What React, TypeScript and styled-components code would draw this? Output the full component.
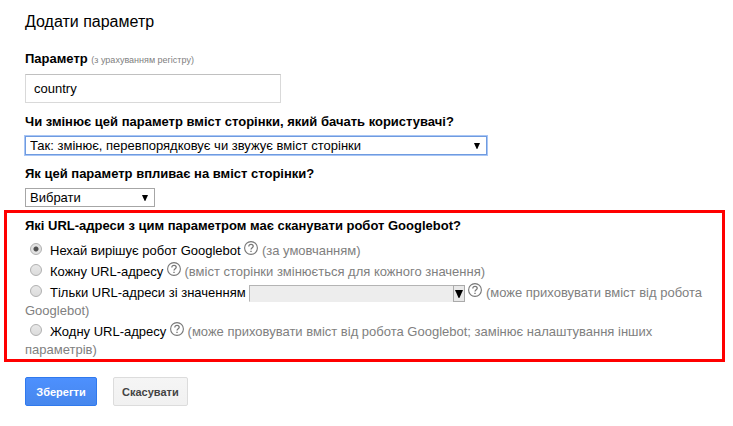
import React from "react";
import styled, { createGlobalStyle } from "styled-components";

const GlobalStyle = createGlobalStyle`
  *, *::before, *::after { box-sizing: border-box; }
  body {
    margin: 0;
    background: #fff;
    color: #000;
    font: 13px/18px "Liberation Sans", Arial, sans-serif;
  }
  input, select, button { font: inherit; margin: 0; }
`;

const Form = styled.form`
  display: flex;
  flex-direction: column;
  padding: 13px 8px 20px 4px;
`;

const Section = styled.div`
  display: flex;
  flex-direction: column;
  align-items: flex-start;
  padding-left: 21px;
`;

const Title = styled.h1`
  margin: 0 0 19px;
  font-size: 16px;
  font-weight: 400;
  line-height: 18px;
`;

const FieldLabel = styled.label`
  font-weight: 700;
  margin-bottom: 5px;
`;

const Note = styled.span`
  font-size: 9px;
  font-weight: 400;
  color: #808080;
`;

const TextInput = styled.input`
  width: 256px;
  max-width: 100%;
  height: 29px;
  margin-bottom: 10px;
  padding: 0 8px;
  border: 1px solid #d9d9d9;
  border-top-color: #c0c0c0;
  outline: none;
`;

const SelectFrame = styled.div<{ $width: number }>`
  display: grid;
  align-items: center;
  width: ${(p) => p.$width}px;
  max-width: 100%;
  margin-bottom: 10px;

  & > * { grid-area: 1 / 1; }
  & > svg { justify-self: end; margin-right: 7px; pointer-events: none; }
`;

const Select = styled.select<{ $active?: boolean }>`
  appearance: none;
  width: 100%;
  height: 19px;
  padding: 0 20px 0 4px;
  border: 1px solid ${(p) => (p.$active ? "#6f9be0" : "#a6a6a6")};
  border-radius: 0;
  box-shadow: ${(p) => (p.$active ? "0 0 0 1px #a9c6f5" : "none")};
  background: #fff;
  color: #000;
  outline: none;
`;

const Highlight = styled.fieldset`
  min-width: 0;
  margin: -7px 0 0;
  padding: 4px 8px 0 18px;
  border: 3px solid #f00;
`;

const Question = styled.div`
  font-weight: 700;
  margin-bottom: 4px;
`;

const Option = styled.div`
  padding-top: 3px;
  color: #808080;
`;

const OptionLabel = styled.label`
  color: #000;
`;

const Radio = styled.input`
  appearance: none;
  width: 12px;
  height: 12px;
  margin: 0 8px 0 5px;
  border: 1px solid #b0b0b0;
  border-radius: 50%;
  background: linear-gradient(#e8e8e8, #dcdcdc);
  vertical-align: 0;

  &:checked {
    background: radial-gradient(circle, #505050 0 2px, #e2e2e2 3px);
  }
`;

const HelpButton = styled.button`
  display: inline-block;
  width: 14px;
  height: 14px;
  margin-top: -2px;
  padding: 0;
  border: 0;
  background: none;
  color: #777;
  vertical-align: 0;

  & > svg { display: block; }
`;

const Combo = styled.span`
  display: inline-flex;
  width: 216px;
  height: 17px;
  margin-right: 3px;
  vertical-align: bottom;
`;

const ComboInput = styled.input`
  flex: 1;
  min-width: 0;
  padding: 0 4px;
  border: 1px solid #b4b4b4;
  border-right: 0;
  border-bottom-color: #ededed;
  border-radius: 0;
  background: #ededed;
`;

const ComboButton = styled.button`
  display: flex;
  align-items: center;
  justify-content: center;
  width: 12px;
  padding: 0;
  border: 1px solid #aaa;
  background: #e8e8e8;
  color: #000;
`;

const Actions = styled.div`
  display: flex;
  gap: 16px;
  margin-top: 15px;
  padding-left: 21px;
`;

const ActionButton = styled.button<{ $primary?: boolean }>`
  min-width: 72px;
  height: 29px;
  padding: 0 8px;
  border: 1px solid ${(p) => (p.$primary ? "#3079ed" : "#dcdcdc")};
  border-radius: 2px;
  background: ${(p) =>
    p.$primary
      ? "linear-gradient(#4d90fe, #4787ed)"
      : "linear-gradient(#f5f5f5, #f1f1f1)"};
  color: ${(p) => (p.$primary ? "#fff" : "#444")};
  font-size: 11px;
  font-weight: 700;
`;

const Arrow = ({ size = 6 }: { size?: number }) => (
  <svg width={size} height={size} viewBox="0 0 6 6" aria-hidden="true">
    <path d="M0 0h6L3.3 6h-.6z" fill="#000" />
  </svg>
);

const Help = () => (
  <HelpButton type="button" aria-label="Довідка">
    <svg width="14" height="14" viewBox="0 0 14 14" fill="none" aria-hidden="true">
      <circle cx="7" cy="7" r="6.4" stroke="currentColor" strokeWidth="1.1" />
      <path
        d="M4.8 5.5C4.8 4.1 5.7 3.3 7 3.3s2.2.8 2.2 1.9C9.2 6.7 7 6.8 7 8.6"
        stroke="currentColor"
        strokeWidth="1.3"
      />
      <path d="M6.3 9.7h1.4v1.4H6.3z" fill="currentColor" />
    </svg>
  </HelpButton>
);

const options = [
  { id: "auto", label: "Нехай вирішує робот Googlebot", note: "(за умовчанням)" },
  { id: "every", label: "Кожну URL-адресу", note: "(вміст сторінки змінюється для кожного значення)" },
  { id: "only", label: "Тільки URL-адреси зі значенням", note: "(може приховувати вміст від робота Googlebot)", combo: true },
  { id: "none", label: "Жодну URL-адресу", note: "(може приховувати вміст від робота Googlebot; замінює налаштування інших параметрів)" },
];

export default function App() {
  return (
    <>
      <GlobalStyle />
      <Form onSubmit={(e) => e.preventDefault()}>
        <Section>
          <Title>Додати параметр</Title>
          <FieldLabel htmlFor="param">
            Параметр <Note>(з урахуванням регістру)</Note>
          </FieldLabel>
          <TextInput id="param" defaultValue="country" />
          <FieldLabel htmlFor="changes">
            Чи змінює цей параметр вміст сторінки, який бачать користувачі?
          </FieldLabel>
          <SelectFrame $width={462}>
            <Select id="changes" $active>
              <option>Так: змінює, перевпорядковує чи звужує вміст сторінки</option>
            </Select>
            <Arrow />
          </SelectFrame>
          <FieldLabel htmlFor="effect">Як цей параметр впливає на вміст сторінки?</FieldLabel>
          <SelectFrame $width={130}>
            <Select id="effect">
              <option>Вибрати</option>
            </Select>
            <Arrow />
          </SelectFrame>
        </Section>
        <Highlight aria-labelledby="crawl">
          <Question id="crawl">Які URL-адреси з цим параметром має сканувати робот Googlebot?</Question>
          {options.map((o) => (
            <Option key={o.id}>
              <Radio type="radio" name="crawl" id={o.id} defaultChecked={o.id === "auto"} />
              <OptionLabel htmlFor={o.id}>{o.label}</OptionLabel>{" "}
              {o.combo && (
                <Combo>
                  <ComboInput aria-label="Значення" disabled />
                  <ComboButton type="button" aria-label="Показати значення">
                    <Arrow size={8} />
                  </ComboButton>
                </Combo>
              )}
              <Help /> {o.note}
            </Option>
          ))}
        </Highlight>
        <Actions>
          <ActionButton type="submit" $primary>Зберегти</ActionButton>
          <ActionButton type="button">Скасувати</ActionButton>
        </Actions>
      </Form>
    </>
  );
}
